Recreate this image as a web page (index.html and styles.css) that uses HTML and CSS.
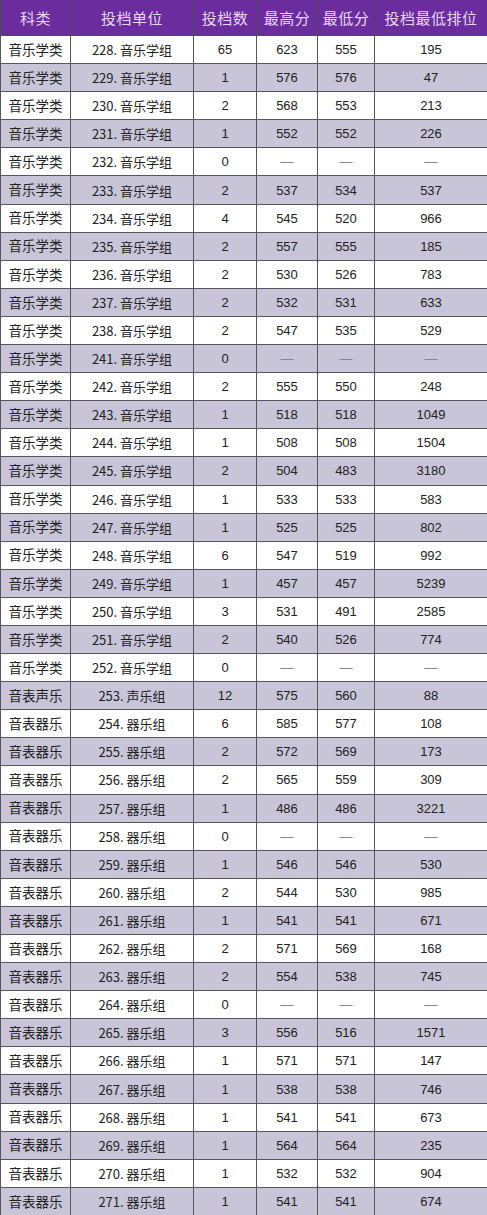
FILE: index.html
```html
<!DOCTYPE html>
<html lang="zh">
<head>
<meta charset="utf-8">
<link rel="stylesheet" href="styles.css">
</head>
<body>
<table class="grid">
<colgroup>
<col class="c1"><col class="c2"><col class="c3"><col class="c4"><col class="c5"><col class="c6">
</colgroup>
<thead>
<tr><th>科类</th><th>投档单位</th><th>投档数</th><th>最高分</th><th>最低分</th><th>投档最低排位</th></tr>
</thead>
<tbody id="rows"></tbody>
</table>
<script src="script.js"></script>
</body>
</html>
```
FILE: styles.css
```css
html, body {
  margin: 0;
  padding: 0;
  background: #ffffff;
}
.grid {
  width: 487px;
  border-collapse: collapse;
  table-layout: fixed;
  font-family: "Noto Sans CJK SC", "Noto Sans", sans-serif;
  color: #222222;
}
.c1 { width: 70px; }
.c2 { width: 123px; }
.c3 { width: 63px; }
.c4 { width: 61px; }
.c5 { width: 57px; }
.c6 { width: 113px; }
.grid th {
  height: 35px;
  background: #6b2c9d;
  color: #e6d8f4;
  font-size: 15px;
  font-weight: 400;
  border: 1px solid #4a4a55;
  border-top: none;
  padding: 0;
  letter-spacing: 0.5px;
}
.grid td {
  height: 27.1px;
  border: 1px solid #55555e;
  text-align: center;
  font-size: 13px;
  padding: 0;
  line-height: 1;
}
.grid td.num {
  font-family: "Liberation Sans", Arial, sans-serif;
  font-size: 13px;
}
.grid td.kind {
  font-size: 13.5px;
}
.grid tbody tr:nth-child(even) td {
  background: #c8c5d8;
}
.dash {
  color: #888;
}
```
FILE: script.js
```js
const data = [
["音乐学类","228. 音乐学组","65","623","555","195"],
["音乐学类","229. 音乐学组","1","576","576","47"],
["音乐学类","230. 音乐学组","2","568","553","213"],
["音乐学类","231. 音乐学组","1","552","552","226"],
["音乐学类","232. 音乐学组","0","—","—","—"],
["音乐学类","233. 音乐学组","2","537","534","537"],
["音乐学类","234. 音乐学组","4","545","520","966"],
["音乐学类","235. 音乐学组","2","557","555","185"],
["音乐学类","236. 音乐学组","2","530","526","783"],
["音乐学类","237. 音乐学组","2","532","531","633"],
["音乐学类","238. 音乐学组","2","547","535","529"],
["音乐学类","241. 音乐学组","0","—","—","—"],
["音乐学类","242. 音乐学组","2","555","550","248"],
["音乐学类","243. 音乐学组","1","518","518","1049"],
["音乐学类","244. 音乐学组","1","508","508","1504"],
["音乐学类","245. 音乐学组","2","504","483","3180"],
["音乐学类","246. 音乐学组","1","533","533","583"],
["音乐学类","247. 音乐学组","1","525","525","802"],
["音乐学类","248. 音乐学组","6","547","519","992"],
["音乐学类","249. 音乐学组","1","457","457","5239"],
["音乐学类","250. 音乐学组","3","531","491","2585"],
["音乐学类","251. 音乐学组","2","540","526","774"],
["音乐学类","252. 音乐学组","0","—","—","—"],
["音表声乐","253. 声乐组","12","575","560","88"],
["音表器乐","254. 器乐组","6","585","577","108"],
["音表器乐","255. 器乐组","2","572","569","173"],
["音表器乐","256. 器乐组","2","565","559","309"],
["音表器乐","257. 器乐组","1","486","486","3221"],
["音表器乐","258. 器乐组","0","—","—","—"],
["音表器乐","259. 器乐组","1","546","546","530"],
["音表器乐","260. 器乐组","2","544","530","985"],
["音表器乐","261. 器乐组","1","541","541","671"],
["音表器乐","262. 器乐组","2","571","569","168"],
["音表器乐","263. 器乐组","2","554","538","745"],
["音表器乐","264. 器乐组","0","—","—","—"],
["音表器乐","265. 器乐组","3","556","516","1571"],
["音表器乐","266. 器乐组","1","571","571","147"],
["音表器乐","267. 器乐组","1","538","538","746"],
["音表器乐","268. 器乐组","1","541","541","673"],
["音表器乐","269. 器乐组","1","564","564","235"],
["音表器乐","270. 器乐组","1","532","532","904"],
["音表器乐","271. 器乐组","1","541","541","674"]
];
const tbody = document.getElementById("rows");
for (const r of data) {
  const tr = document.createElement("tr");
  r.forEach((v, i) => {
    const td = document.createElement("td");
    td.textContent = v;
    if (i === 0) td.className = "kind";
    else if (i >= 2) td.className = "num" + (v === "—" ? " dash" : "");
    tr.appendChild(td);
  });
  tbody.appendChild(tr);
}
```
